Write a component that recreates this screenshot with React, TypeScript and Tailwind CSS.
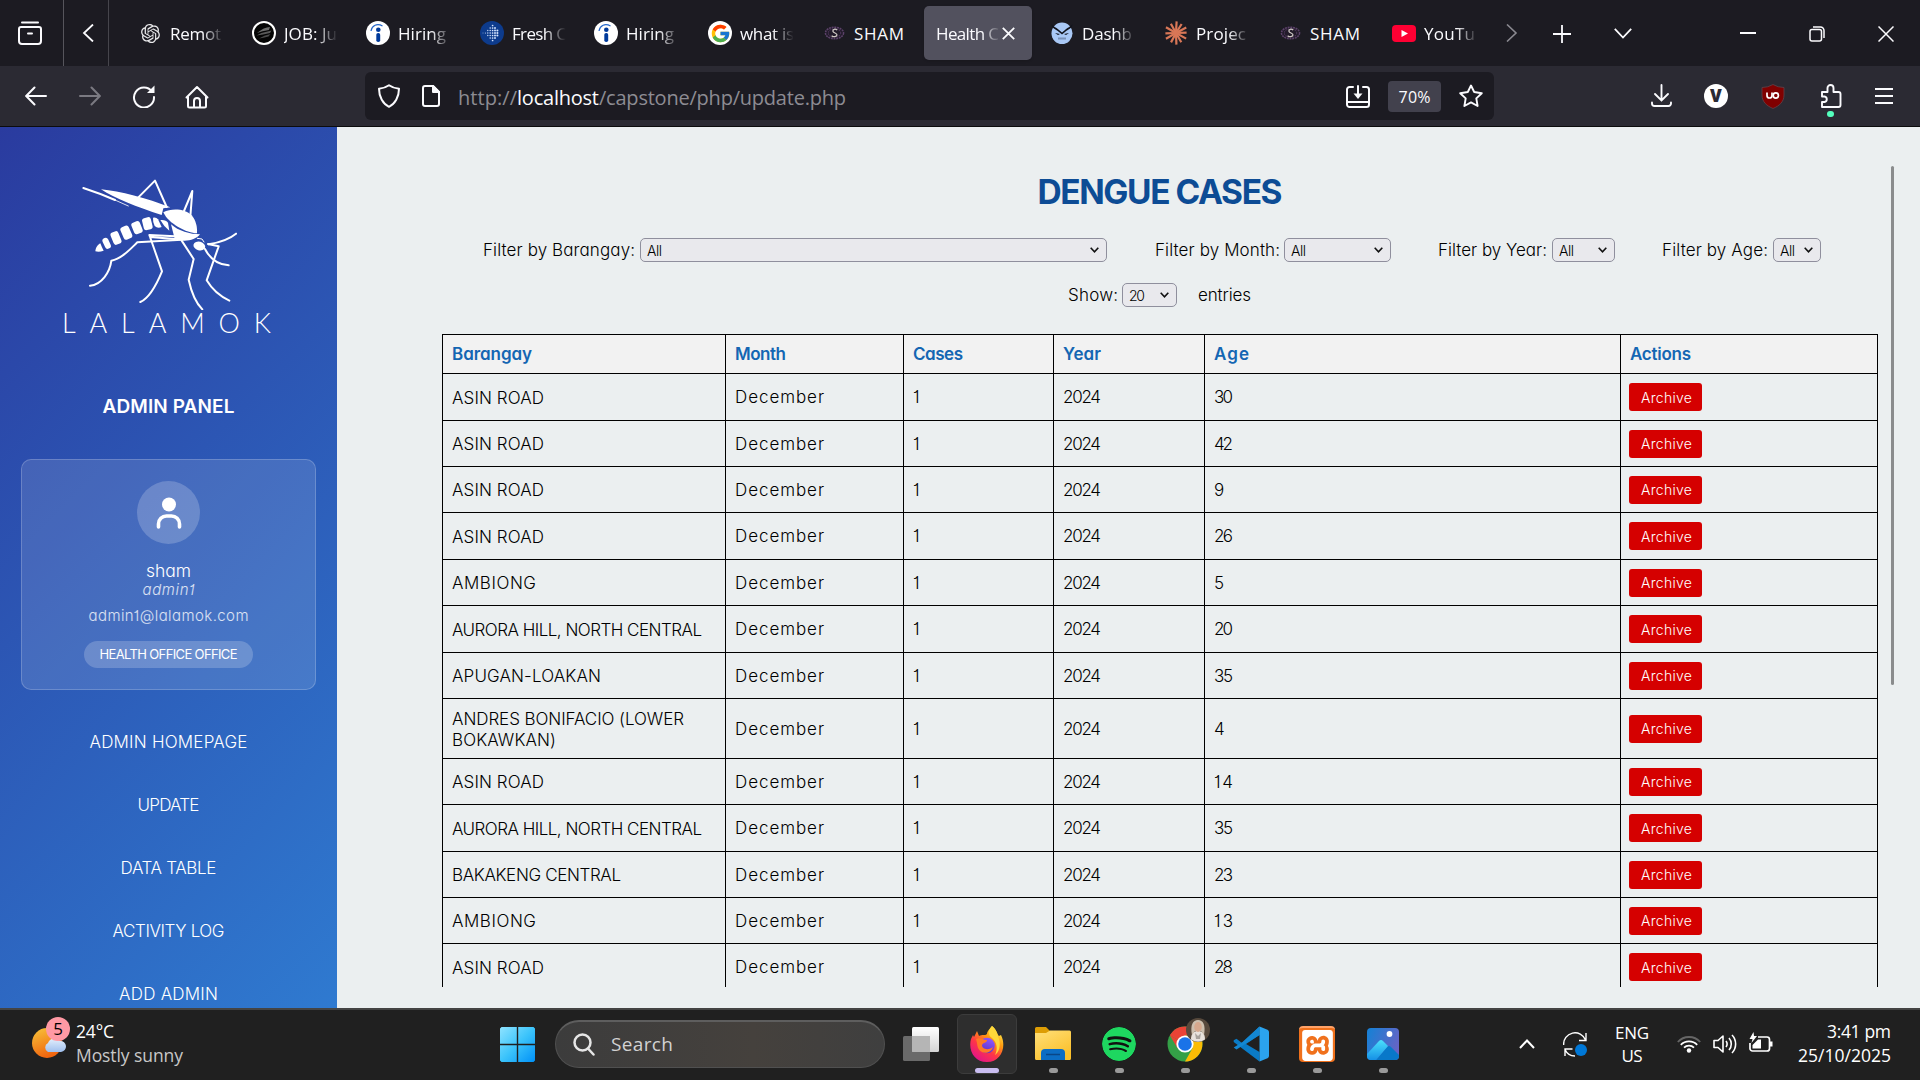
import { useLayoutEffect, useRef, type ReactNode } from "react";
import { RiOpenaiFill } from "react-icons/ri";
import { FcGoogle } from "react-icons/fc";
import { SiSpotify, SiXampp } from "react-icons/si";

/** A single line of text whose tracking is adjusted so that it spans `w` pixels. */
function Fit({ t, w, className = "" }: { t: string; w: number; className?: string }) {
  const ref = useRef<HTMLSpanElement>(null);
  useLayoutEffect(() => {
    const el = ref.current;
    if (!el) return;
    el.style.letterSpacing = "0px";
    el.style.marginRight = "0px";
    const natural = el.getBoundingClientRect().width;
    const gap = t.length > 1 ? (w + 1 - natural) / (t.length - 1) : 0;
    el.style.letterSpacing = `${gap}px`;
    el.style.marginRight = `${-gap}px`;
  }, [t, w]);
  return (
    <span ref={ref} className={"inline-block shrink-0 whitespace-nowrap " + className}>
      {t}
    </span>
  );
}

/* ---------- tab strip ---------- */

const IndeedIcon = () => (
  <svg viewBox="0 0 24 24" className="h-6 w-6">
    <circle cx="12" cy="12" r="12" fill="#fff" />
    <circle cx="12.3" cy="8.7" r="2.3" fill="#003a9b" />
    <rect x="10.3" y="12" width="3.9" height="9" rx="1.8" fill="#003a9b" />
    <path d="M5 10C6 4.500 11 2 16.500 5" fill="none" stroke="#2164c9" strokeWidth="1.200" />
  </svg>
);
const JobIcon = () => (
  <svg viewBox="0 0 24 24" className="h-6 w-6">
    <circle cx="12" cy="12" r="11" fill="#050505" stroke="#fff" strokeWidth="2" />
    <path d="M5 12Q12 6 18 6L17 9Q10 10 5 12Z" fill="#6d6d6d" />
    <path d="M4.500 14.500Q11 11 19.500 9.500L18 12Q11 13.500 4.500 14.500Z" fill="#5a5a5a" />
    <path d="M7 17.500Q12 14 18.500 13L16.500 15.500Q11 17 7 17.500Z" fill="#4b4b4b" />
  </svg>
);
const FreshIcon = () => {
  const cols = [1, 1, 2, 3, 4, 3, 2];
  return (
    <svg viewBox="0 0 24 24" className="h-6 w-6">
      <circle cx="12" cy="12" r="12" fill="#0d3b8c" />
      {cols.map((n, i) =>
        Array.from({ length: n * 2 - 1 }, (_, j) => (
          <circle key={`${i}-${j}`} cx={3 + i * 2.4} cy={12 + (j - n + 1) * 2.5} r={0.45 + i * 0.1} fill="#d7e6ff" />
        )),
      )}
    </svg>
  );
};
const GoogleIcon = () => (
  <span className="flex h-6 w-6 items-center justify-center rounded-full bg-white">
    <FcGoogle className="h-[21px] w-[21px]" />
  </span>
);
const ShamIcon = () => (
  <svg viewBox="0 0 22 14" className="h-[14px] w-[21px]">
    <ellipse cx="11" cy="7" rx="9.500" ry="6" fill="#221b2a" stroke="#5b4169" strokeWidth="1.600" strokeDasharray="2 0.8" />
    <ellipse cx="11" cy="7" rx="6.500" ry="4.500" fill="none" stroke="#4a3456" strokeWidth="1.200" strokeDasharray="1.500 1" />
    <path d="M13.800 4C12 2.300 9 3 9.300 5S13.800 7 13.600 9S10 11.600 8 9.800" fill="none" stroke="#cfc8c4" strokeWidth="1.300" />
  </svg>
);
const DashIcon = () => (
  <svg viewBox="0 0 24 24" className="h-6 w-6">
    <ellipse cx="12" cy="12.300" rx="10.500" ry="10.800" fill="#a9c8f5" />
    <path d="M1.500 3C2 8 6 8 9 11L12 13.500L15 11C18 8 22 8 22.500 3C21 6 17 6.500 15 9L12 11.500L9 9C7 6.500 3 6 1.500 3Z" fill="#10131c" />
    <path d="M5 12L10 13L8 14ZM19 12L14 13L16 14Z" fill="#10131c" />
    <rect x="8" y="16.500" width="8" height="2" fill="#7b92b8" />
  </svg>
);
const ClaudeIcon = () => (
  <svg viewBox="0 0 24 24" className="h-6 w-6">
    {[3, 32, 62, 88, 119, 150, 178, 208, 240, 268, 300, 331].map((a, i) => (
      <path key={a} d={i % 2 ? "M12 12V1.400" : "M12 12V0.400"} stroke="#d97757" strokeWidth="2.200" transform={`rotate(${a} 12 12)`} />
    ))}
  </svg>
);
const YoutubeIcon = () => (
  <svg viewBox="0 0 24 17" className="h-[17px] w-6">
    <rect width="24" height="17" rx="4" fill="#ff0033" />
    <path d="M9.500 5L16 8.500L9.500 12Z" fill="#fff" />
  </svg>
);

type Tab = { icon?: ReactNode; label: string; w: number; active?: boolean; solid?: boolean };
const tabs: Tab[] = [
  { icon: <RiOpenaiFill className="h-[23px] w-[23px] text-[#e8e8ea]" />, label: "Remot", w: 50 },
  { icon: <JobIcon />, label: "JOB: Ju", w: 52 },
  { icon: <IndeedIcon />, label: "Hiring", w: 47 },
  { icon: <FreshIcon />, label: "Fresh C", w: 54 },
  { icon: <IndeedIcon />, label: "Hiring", w: 47 },
  { icon: <GoogleIcon />, label: "what is", w: 53 },
  { icon: <ShamIcon />, label: "SHAM", w: 49, solid: true },
  { label: "Health C", w: 62, active: true },
  { icon: <DashIcon />, label: "Dashb", w: 49 },
  { icon: <ClaudeIcon />, label: "Projec", w: 49 },
  { icon: <ShamIcon />, label: "SHAM", w: 49, solid: true },
  { icon: <YoutubeIcon />, label: "YouTu", w: 50 },
];

function TabStrip() {
  return (
    <div className="flex h-[66px] items-center bg-[#1c1b22] text-[17px] text-[#fbfbfe]">
      <div className="flex h-full w-[64px] items-center border-r border-[#56555c] pl-[17px]">
        <svg viewBox="0 0 26 24" className="h-6 w-[26px]" fill="none" stroke="#fbfbfe" strokeWidth="2" strokeLinecap="round">
          <path d="M5 1.500H21" />
          <path d="M2 8V20a3 3 0 0 0 3 3H21a3 3 0 0 0 3-3V8a2 2 0 0 0-2-2H4a2 2 0 0 0-2 2ZM11 12.500H15" />
        </svg>
      </div>
      <div className="flex h-full w-[45px] items-center border-r border-[#46454c] pl-[18px]">
        <svg viewBox="0 0 12 18" className="h-[18px] w-3" fill="none" stroke="#fbfbfe" strokeWidth="1.800">
          <path d="M11 0.500L2 9L11 17.500" />
        </svg>
      </div>
      <div className="ml-[14px] flex h-full items-center">
        {tabs.map((tab, i) =>
          tab.active ? (
            <div key={i} className="mx-[3px] flex h-[54px] w-[108px] items-center rounded-[5px] bg-[#52515e] pl-3 shadow">
              <span className="w-[64px] overflow-hidden pt-px [mask-image:linear-gradient(to_right,black_72%,transparent)]">
                <Fit t={tab.label} w={tab.w} />
              </span>
              <svg viewBox="0 0 13 13" className="ml-0.5 h-[13px] w-[13px]" stroke="#fbfbfe" strokeWidth="1.800">
                <path d="M0.800 0.800L12.200 12.200M12.200 0.800L0.800 12.200" />
              </svg>
            </div>
          ) : (
            <div key={i} className="flex w-[114px] items-center pl-[15px]">
              <span className="flex w-6 shrink-0 justify-center">{tab.icon}</span>
              {tab.solid ? (
                <Fit t={tab.label} w={tab.w} className="ml-2 pt-px" />
              ) : (
                <span className="ml-2 w-[56px] overflow-hidden pt-px [mask-image:linear-gradient(to_right,black_58%,transparent_96%)]">
                  <Fit t={tab.label} w={tab.w} />
                </span>
              )}
            </div>
          ),
        )}
      </div>
      <svg viewBox="0 0 12 18" className="ml-[15px] h-[18px] w-3" fill="none" stroke="#8a8990" strokeWidth="1.600">
        <path d="M1 0.500L10 9L1 17.500" />
      </svg>
      <svg viewBox="0 0 18 18" className="ml-[35px] mt-px h-[18px] w-[18px]" stroke="#fbfbfe" strokeWidth="1.800">
        <path d="M9 0V18M0 9H18" />
      </svg>
      <svg viewBox="0 0 18 11" className="ml-[43px] h-[11px] w-[18px]" fill="none" stroke="#fbfbfe" strokeWidth="1.800">
        <path d="M0.800 0.800L9 9.500L17.200 0.800" />
      </svg>
      <svg viewBox="0 0 16 2" className="ml-[108px] h-0.5 w-4" fill="#fbfbfe">
        <rect width="16" height="2" />
      </svg>
      <svg viewBox="0 0 16 16" className="ml-[53px] mt-px h-4 w-4" fill="none" stroke="#fbfbfe" strokeWidth="1.500">
        <rect x="1" y="3.500" width="11.500" height="11.500" rx="2" />
        <path d="M4 1H11.500A3.500 3.500 0 0 1 15 4.500V12" />
      </svg>
      <svg viewBox="0 0 16 16" className="ml-[53px] mt-px h-4 w-4" stroke="#fbfbfe" strokeWidth="1.500">
        <path d="M0.500 0.500L15.500 15.500M15.500 0.500L0.500 15.500" />
      </svg>
    </div>
  );
}

/* ---------- navigation toolbar ---------- */

function Toolbar() {
  return (
    <div className="flex h-[61px] items-center border-b border-[#0c0c0d] bg-[#2b2a33] pl-[25px]">
      <svg viewBox="0 0 22 20" className="h-5 w-[22px]" fill="none" stroke="#fbfbfe" strokeWidth="2" strokeLinecap="round">
        <path d="M21 10H1.500M9.500 1.500L1.200 10L9.500 18.500" />
      </svg>
      <svg viewBox="0 0 22 20" className="ml-8 h-5 w-[22px]" fill="none" stroke="#7b7a82" strokeWidth="2" strokeLinecap="round">
        <path d="M1 10H20.500M12.500 1.500L20.800 10L12.500 18.500" />
      </svg>
      <svg viewBox="0 0 24 24" className="ml-[31px] h-6 w-6" fill="none" stroke="#fbfbfe" strokeWidth="2" strokeLinecap="round">
        <path d="M20 7.500A10 10 0 1 0 22 13" />
        <path d="M22.500 1.500V9H15Z" fill="#fbfbfe" stroke="none" />
      </svg>
      <svg viewBox="0 0 24 24" className="ml-[29px] mt-px h-6 w-6" fill="none" stroke="#fbfbfe" strokeWidth="2" strokeLinejoin="round" strokeLinecap="round">
        <path d="M1.500 12.500L12 2L22.500 12.500M3 11V21a1.500 1.500 0 0 0 1.500 1.500H19.500A1.500 1.500 0 0 0 21 21V11M9 22V16a3 3 0 0 1 6 0V22" />
      </svg>
      <div className="ml-[156px] flex h-12 w-[1129px] items-center rounded-[6px] bg-[#1c1b22] pl-[13px]">
        <svg viewBox="0 0 22 24" className="h-6 w-[22px]" fill="none" stroke="#fbfbfe" strokeWidth="2" strokeLinejoin="round">
          <path d="M11 1.200Q15 4 21 4.800C21 13 17 20 11 22.800C5 20 1 13 1 4.800Q7 4 11 1.200Z" />
        </svg>
        <svg viewBox="0 0 18 22" className="ml-[22px] h-[22px] w-[18px]" fill="none" stroke="#fbfbfe" strokeWidth="2" strokeLinejoin="round">
          <path d="M11 1H3A2 2 0 0 0 1 3V19A2 2 0 0 0 3 21H15A2 2 0 0 0 17 19V7Z" />
          <path d="M11 1V7H17Z" fill="#fbfbfe" />
        </svg>
        <div className="ml-[18px] flex w-[870px] pt-[3px] text-[20px] text-[#8d8c93]">
          <Fit t="http://" w={58} />
          <Fit t="localhost" w={81} className="text-[#fbfbfe]" />
          <Fit t="/capstone/php/update.php" w={246} />
        </div>
        <svg viewBox="0 0 24 23" className="ml-[18px] h-[23px] w-6 shrink-0" fill="none" stroke="#fbfbfe" strokeWidth="2" strokeLinecap="round">
          <path d="M7 2H3.500A2.500 2.500 0 0 0 1 4.500V19.500A2.500 2.500 0 0 0 3.500 22H20.500A2.500 2.500 0 0 0 23 19.500V4.500A2.500 2.500 0 0 0 20.500 2H17M1 17H23M12 1V11" />
          <path d="M7.500 8.500H16.500L12 14Z" fill="#fbfbfe" stroke="none" />
        </svg>
        <div className="ml-[18px] flex h-[31px] w-[53px] shrink-0 items-center justify-center rounded-[4px] bg-[#42414d] pt-px text-[16px] text-[#fbfbfe]">
          <Fit t="70%" w={31} />
        </div>
        <svg viewBox="0 0 24 24" className="ml-[18px] h-6 w-6 shrink-0" fill="none" stroke="#fbfbfe" strokeWidth="1.900" strokeLinejoin="round">
          <path d="M12 1.500L15.200 8L22.800 9.200L17.300 14.400L18.600 22L12 18.400L5.400 22L6.700 14.400L1.200 9.200L8.800 8Z" />
        </svg>
      </div>
      <svg viewBox="0 0 22 24" className="ml-[156px] h-6 w-[22px]" fill="none" stroke="#fbfbfe" strokeWidth="1.900" strokeLinecap="round">
        <path d="M11.500 1V16M5 10L11.500 16.500L18 10M2 18.500V19.500A2.500 2.500 0 0 0 4.500 22H18.500A2.500 2.500 0 0 0 21 19.500V18.500" />
      </svg>
      <span className="ml-[32px] flex h-6 w-6 items-center justify-center rounded-full bg-white text-[17px] font-extrabold text-[#2b2a33]">V</span>
      <svg viewBox="0 0 24 25" className="ml-[33px] h-[25px] w-6">
        <path d="M12 0.500Q17 3.500 23 3.500V11C23 18 18 22 12 24.500C6 22 1 18 1 11V3.500Q7 3.500 12 0.500Z" fill="#800000" stroke="#62424a" strokeWidth="0.800" />
        <path d="M6 8.500V11.500A2.500 2.500 0 0 0 11 11.500V8.500" fill="none" stroke="#fff" strokeWidth="1.700" />
        <circle cx="14.800" cy="11.500" r="2.600" fill="none" stroke="#fff" strokeWidth="1.700" />
      </svg>
      <div className="relative ml-[35px] h-6 w-[22px]">
        <svg viewBox="0 0 22 24" className="h-6 w-[22px]" fill="none" stroke="#fbfbfe" strokeWidth="1.900" strokeLinejoin="round">
          <path d="M2 8H7.500V4A3 3 0 0 1 13.500 4V8H18.500A2 2 0 0 1 20.500 10V21A2 2 0 0 1 18.500 23H2V18H4.500A2.800 2.800 0 0 0 4.500 12.500H2Z" />
        </svg>
        <span className="absolute left-[7px] top-[27px] h-[6px] w-[7px] rounded-full bg-[#54ffbd]" />
      </div>
      <svg viewBox="0 0 18 16" className="ml-[33px] h-4 w-[18px]" stroke="#fbfbfe" strokeWidth="1.800">
        <path d="M0 1H18M0 8H18M0 15H18" />
      </svg>
    </div>
  );
}

/* ---------- sidebar ---------- */

const segments = [
  { x: 320, y: 349, w: 18, h: 34, r: -25 },
  { x: 348, y: 333, w: 25, h: 39, r: -22 },
  { x: 379, y: 317, w: 27, h: 40, r: -24 },
  { x: 411, y: 302, w: 27, h: 37, r: -22 },
  { x: 442, y: 290, w: 27, h: 37, r: -14 },
];

function Mosquito() {
  return (
    <svg viewBox="0 0 1011 549" className="h-[183px] w-[337px] shrink-0" fill="none" stroke="#fff" strokeWidth="6" strokeLinecap="round" strokeLinejoin="round">
      <path d="M250 183C290 196 320 208 345 219" />
      <path d="M320 208L385 237" strokeWidth="2.500" />
      <g fill="#fff" stroke="none">
        <path d="M303 187C360 193 440 213 511 241L490 244L485 264C410 240 345 215 303 187Z" />
        <path d="M490 256C515 243 555 245 575 265C588 280 592 300 591 319C560 319 505 290 490 256Z" />
        <path d="M513 292C535 312 570 322 600 322C586 341 550 347 524 335Z" />
        <path d="M286 373C287 362 294 352 301 349C304 356 307 364 311 371Q298 376 286 373Z" />
        <path d="M459 272Q469 270 474 277L485 300Q473 306 464 297Q458 286 459 272Z" />
        <path d="M481 279Q497 277 504 287L508 311Q491 298 481 279Z" />
        <ellipse cx="598" cy="357" rx="18" ry="13" transform="rotate(15 598 357)" />
        {segments.map((s) => (
          <rect key={s.x} x={s.x - s.w / 2} y={s.y - s.h / 2} width={s.w} height={s.h} rx="8" transform={`rotate(${s.r} ${s.x} ${s.y})`} />
        ))}
      </g>
      <path d="M412 214L465 161L500 240M552 252L577 192L571 268" />
      <path d="M545 338L412 346C390 367 365 395 334 401C330 435 305 473 270 476" />
      <path d="M525 328L448 324L486 433C470 472 448 513 421 525M450 330L525 336" />
      <path d="M545 341L581 396L566 458C574 495 590 530 607 547" />
      <path d="M624 351L656 358L620 460C635 485 660 508 688 521" />
      <path d="M615 366C630 395 650 413 686 415M626 352C660 346 690 335 708 320" />
      <path d="M592 334L606 336L612 345" strokeWidth="3" />
    </svg>
  );
}

const nav = [
  { t: "ADMIN HOMEPAGE", w: 157 },
  { t: "UPDATE", w: 61 },
  { t: "DATA TABLE", w: 95 },
  { t: "ACTIVITY LOG", w: 111 },
  { t: "ADD ADMIN", w: 98 },
];

function Sidebar() {
  return (
    <aside className="flex w-[337px] shrink-0 flex-col items-center overflow-hidden bg-[linear-gradient(135deg,#2a3b9f_0%,#2f7ad0_100%)] text-white">
      <Mosquito />
      <div className="mr-[4px] flex h-[25px] shrink-0 items-center font-[Lato] text-[27px] font-light leading-none">
        <Fit t="LALAMOK" w={208} />
      </div>
      <div className="mt-[60px] flex h-6 shrink-0 items-center text-[19px] font-semibold">
        <Fit t="ADMIN PANEL" w={131} />
      </div>
      <div className="mt-10 flex h-[231px] w-[295px] shrink-0 flex-col items-center rounded-[10px] border border-white/20 bg-white/12 pt-[21px]">
        <div className="flex h-[63px] w-[63px] shrink-0 items-center justify-center rounded-full bg-white/20">
          <svg viewBox="0 0 26 32" className="h-8 w-[26px]">
            <circle cx="13" cy="7.500" r="7" fill="#fff" />
            <path d="M2.500 30V27A8 8 0 0 1 10.500 19H15.500A8 8 0 0 1 23.500 27V30" fill="none" stroke="#fff" strokeWidth="3.600" strokeLinecap="round" />
          </svg>
        </div>
        <div className="mt-[17px] flex h-5 items-center text-[17.5px] font-light"><Fit t="sham" w={44} /></div>
        <div className="flex h-[19px] items-center text-[15px] font-light italic text-white/80"><Fit t="admin1" w={51} /></div>
        <div className="mt-[7px] flex h-[19px] items-center text-[15px] font-light text-white/80"><Fit t="admin1@lalamok.com" w={159} /></div>
        <div className="mt-[15px] flex h-[27px] w-[169px] items-center justify-center rounded-full bg-white/20 text-[13px]">
          <Fit t="HEALTH OFFICE OFFICE" w={137} />
        </div>
      </div>
      <nav className="mt-[21px] flex flex-col items-center text-[17px] font-light">
        {nav.map((n) => (
          <div key={n.t} className="flex h-[63px] items-center"><Fit t={n.t} w={n.w} /></div>
        ))}
      </nav>
    </aside>
  );
}

/* ---------- main content ---------- */

function Select({ value, vw, className }: { value: string; vw: number; className: string }) {
  return (
    <span className={"flex h-6 items-center justify-between rounded-[5px] border border-[#8f8f9d] bg-[#e9e9ed] pl-[6px] pr-[7px] text-[14px] " + className}>
      <Fit t={value} w={vw} />
      <svg viewBox="0 0 9 6" className="h-1.5 w-[9px]" fill="none" stroke="#111" strokeWidth="1.600">
        <path d="M0.700 0.700L4.500 4.800L8.300 0.700" />
      </svg>
    </span>
  );
}

const filters = [
  { t: "Filter by Barangay:", w: 151, sel: "w-[467px] ml-[4.500px]", slot: "w-[624px]", gap: "" },
  { t: "Filter by Month:", w: 124, sel: "w-[107px]", slot: "w-[236px]", gap: "ml-[48px]" },
  { t: "Filter by Year:", w: 108, sel: "w-[63px]", slot: "w-[177px]", gap: "ml-[47px]" },
  { t: "Filter by Age:", w: 105, sel: "w-[48px]", slot: "w-[159px]", gap: "ml-[47px]" },
];

const headers = [
  { t: "Barangay", w: 79 },
  { t: "Month", w: 50 },
  { t: "Cases", w: 49 },
  { t: "Year", w: 37 },
  { t: "Age", w: 34 },
  { t: "Actions", w: 60 },
];

type Row = { name: { t: string; w: number }[]; age: string; h: string };
const ASIN = [{ t: "ASIN ROAD", w: 91 }];
const AMBIONG = [{ t: "AMBIONG", w: 83 }];
const AURORA = [{ t: "AURORA HILL, NORTH CENTRAL", w: 249 }];
const rows: Row[] = [
  { name: ASIN, age: "30", h: "h-[47px]" },
  { name: ASIN, age: "42", h: "h-[46px]" },
  { name: ASIN, age: "9", h: "h-[46px]" },
  { name: ASIN, age: "26", h: "h-[47px]" },
  { name: AMBIONG, age: "5", h: "h-[46px]" },
  { name: AURORA, age: "20", h: "h-[47px]" },
  { name: [{ t: "APUGAN-LOAKAN", w: 148 }], age: "35", h: "h-[46px]" },
  { name: [{ t: "ANDRES BONIFACIO (LOWER", w: 231 }, { t: "BOKAWKAN)", w: 103 }], age: "4", h: "h-[60px]" },
  { name: ASIN, age: "14", h: "h-[46px]" },
  { name: AURORA, age: "35", h: "h-[47px]" },
  { name: [{ t: "BAKAKENG CENTRAL", w: 168 }], age: "23", h: "h-[46px]" },
  { name: AMBIONG, age: "13", h: "h-[46px]" },
  { name: ASIN, age: "28", h: "h-[47px]" },
];

const gridCols = "grid shrink-0 grid-cols-[283px_178px_150px_151px_416px_257px] border-t border-black";
const cell = "flex items-center border-r border-black pl-[9px] pt-[2px]";

function Main() {
  return (
    <main className="flex min-w-0 flex-1 bg-[#ebeff0] text-black">
      <div className="ml-[105px] flex w-[1436px] shrink-0 flex-col pb-[21px]">
        <h1 className="mt-[51px] flex h-7 shrink-0 items-center justify-center text-[33.500px] font-bold text-[#0d4c95]">
          <Fit t="DENGUE CASES" w={244} />
        </h1>
        <div className="mt-[32px] flex h-6 shrink-0 items-center pl-[41px] text-[17px] font-light">
          {filters.map((f) => (
            <div key={f.t} className={"flex items-center justify-between " + f.slot + " " + f.gap}>
              <Fit t={f.t} w={f.w} className="pt-0.5" />
              <Select value="All" vw={14} className={f.sel} />
            </div>
          ))}
        </div>
        <div className="mt-[21px] flex h-6 shrink-0 items-center pl-[626px] text-[17px] font-light">
          <Fit t="Show:" w={49} className="pt-0.5" />
          <Select value="20" vw={15} className="ml-[4px] w-[55px]" />
          <Fit t="entries" w={52} className="ml-[21px] pt-0.5" />
        </div>
        <div className="mt-[27px] flex min-h-0 flex-1 flex-col overflow-hidden border-l border-black text-[17px] font-light">
          <div className={gridCols + " h-[39px] bg-[#f2f2f2] font-semibold text-[#1466b3]"}>
            {headers.map((h) => (
              <div key={h.t} className={cell}><Fit t={h.t} w={h.w} /></div>
            ))}
          </div>
          {rows.map((r, i) => (
            <div key={i} className={gridCols + " " + r.h}>
              <div className={cell}>
                <div className="flex flex-col items-start leading-[21px]">
                  {r.name.map((n) => <Fit key={n.t} t={n.t} w={n.w} />)}
                </div>
              </div>
              <div className={cell}><Fit t="December" w={88} /></div>
              <div className={cell}>1</div>
              <div className={cell}><Fit t="2024" w={37} /></div>
              <div className={cell}><Fit t={r.age} w={18} /></div>
              <div className="flex items-center border-r border-black pl-2">
                <span className="flex h-7 w-[73px] items-center justify-center rounded-[3px] bg-[#d50000] pl-0.5 text-[14px] text-white">
                  <Fit t="Archive" w={50} />
                </span>
              </div>
            </div>
          ))}
        </div>
      </div>
      <div className="ml-[13px] mt-[39px] h-[519px] w-[3px] rounded-full bg-[#8a8c8d]" />
    </main>
  );
}

/* ---------- taskbar ---------- */

const WeatherIcon = () => (
  <div className="relative h-12 w-[40px]">
    <svg viewBox="0 0 40 48" className="h-12 w-10">
      <defs>
        <linearGradient id="sun" x1="0" y1="0" x2="0.400" y2="1">
          <stop offset="0" stopColor="#f8c53a" />
          <stop offset="1" stopColor="#f0650f" />
        </linearGradient>
        <linearGradient id="cloud" x1="0" y1="0" x2="0" y2="1">
          <stop offset="0" stopColor="#e4effc" />
          <stop offset="1" stopColor="#9fbfee" />
        </linearGradient>
      </defs>
      <circle cx="16" cy="28" r="15" fill="url(#sun)" />
      <path d="M17 37A5 5 0 0 1 17 28A7 7 0 0 1 29 26A5.500 5.500 0 0 1 30 37Z" fill="url(#cloud)" />
    </svg>
    <span className="absolute left-[15px] top-[2px] flex h-6 w-6 items-center justify-center rounded-full bg-[#ff99a4] text-[17px] text-black">5</span>
  </div>
);

const WindowsIcon = () => (
  <svg viewBox="0 0 35 35" className="h-[35px] w-[35px]">
    <defs>
      <linearGradient id="win" x1="0" y1="0" x2="1" y2="1">
        <stop offset="0" stopColor="#8fe3ff" />
        <stop offset="0.500" stopColor="#3cc4fb" />
        <stop offset="1" stopColor="#0091f7" />
      </linearGradient>
    </defs>
    <path d="M1.500 0H16.800V16.800H0V1.500ZM18.200 0H33.500L35 1.500V16.800H18.200ZM0 18.200H16.800V35H1.500L0 33.500ZM18.200 18.200H35V33.500L33.500 35H18.200Z" fill="url(#win)" />
  </svg>
);

const FirefoxIcon = () => (
  <svg viewBox="0 0 34 36" className="h-9 w-[34px]">
    <defs>
      <linearGradient id="ff" x1="0.850" y1="0.050" x2="0.250" y2="0.950">
        <stop offset="0" stopColor="#fff44f" />
        <stop offset="0.350" stopColor="#ff980e" />
        <stop offset="0.650" stopColor="#ff3647" />
        <stop offset="1" stopColor="#e31587" />
      </linearGradient>
      <linearGradient id="ffg" x1="0.700" y1="0" x2="0.300" y2="1">
        <stop offset="0" stopColor="#9059ff" />
        <stop offset="1" stopColor="#5b2fc4" />
      </linearGradient>
    </defs>
    <path d="M22 0C27 4 27 8 29 10L31 9C37 21 31 36 17 36C4 36-2 24 1 13L3 9L4 11L7 5L9 10C12 8 15 10 17 8C17 5 20 3 22 0Z" fill="url(#ff)" />
    <circle cx="17" cy="19.500" r="7.800" fill="url(#ffg)" />
    <path d="M6 13C10 11 12 14 17 14C17 17 13 16.500 12 19C12 23 18 25 23 21C21 28 11 29 8 22C7 19 7 16 6 13Z" fill="#ff7a26" />
    <path d="M22 0C27 4 27 8 29 13C31 20 29 26 25 29C28 23 27 16 22 12C17 9 19 3 22 0Z" fill="#ffd83a" />
  </svg>
);

const FolderIcon = () => (
  <svg viewBox="0 0 36 34" className="h-[34px] w-9">
    <defs>
      <linearGradient id="fold" x1="0" y1="0" x2="0.600" y2="1">
        <stop offset="0" stopColor="#ffe07a" />
        <stop offset="1" stopColor="#fbc02b" />
      </linearGradient>
    </defs>
    <path d="M0 1.500A1.500 1.500 0 0 1 1.500 0H11L15 4V9H0Z" fill="#dd9d05" />
    <path d="M0 6H11L15 3.500H34.500A1.500 1.500 0 0 1 36 5V31.500A1.500 1.500 0 0 1 34.500 33H1.500A1.500 1.500 0 0 1 0 31.500Z" fill="url(#fold)" />
    <path d="M6 33V26A4 4 0 0 1 10 22H26A4 4 0 0 1 30 26V33Z" fill="#0c6dc4" />
    <path d="M11 27.500H25" stroke="#0a4687" strokeWidth="1.500" />
  </svg>
);

const ChromeIcon = () => (
  <div className="relative h-9 w-9">
    <svg viewBox="0 0 36 36" className="h-9 w-9">
      <circle cx="18" cy="18" r="17.500" fill="#34a047" />
      <path d="M18 18L2.800 9.300A17.500 17.500 0 0 1 33.200 9.300H18Z" fill="#ea4335" />
      <path d="M18 9.500H33.200A17.500 17.500 0 0 1 18 35.500L25.500 22.300Z" fill="#fbbc05" />
      <path d="M2.800 9.300L10.500 22.300L18 18Z" fill="#ea4335" />
      <circle cx="18" cy="18" r="8.600" fill="#fff" />
      <circle cx="18" cy="18" r="6.800" fill="#1a73e8" />
    </svg>
    <svg viewBox="0 0 24 24" className="absolute -top-2 left-[19px] h-6 w-6">
      <circle cx="12" cy="12" r="12" fill="#57493c" />
      <path d="M5 21.500C5 15 8 13 12 13S19 15 19 21.500Q12 26 5 21.500Z" fill="#e8e2dc" />
      <path d="M6 17C4 7 7 2 12 2S20 7 18 17L15 13H9Z" fill="#cdbfae" />
      <ellipse cx="12" cy="9" rx="3.800" ry="5" fill="#d6a88d" />
      <path d="M9 15L12 18L15 15L14 21H10Z" fill="#a8a29c" />
    </svg>
  </div>
);

const CodeIcon = () => (
  <svg viewBox="0 0 36 36" className="h-9 w-9">
    <path d="M26.500 0.500L9 17L3.500 12.800L0.700 14.300V16L26.500 35.500V26L13 18L26.500 9Z" fill="#0a7bc6" />
    <path d="M0.700 21.500L3.500 23.500L26.500 9V0.500L9.500 16Z" fill="#1387d2" />
    <path d="M26.500 0.500L34.500 3.800Q36 4.500 36 6V30Q36 31.500 34.500 32.200L26.500 35.500Z" fill="#2ba3ee" />
  </svg>
);

const XamppIcon = () => (
  <span className="flex h-9 w-9 items-center justify-center rounded-[4px] border-t-2 border-[#ffa268] bg-[#f0711c] text-white">
    <SiXampp className="h-[31px] w-[31px]" />
  </span>
);

const PhotosIcon = () => (
  <svg viewBox="0 0 32 32" className="h-8 w-8">
    <defs>
      <linearGradient id="ph" x1="0" y1="0.300" x2="1" y2="0.700">
        <stop offset="0" stopColor="#1b7fd4" />
        <stop offset="1" stopColor="#6a62c4" />
      </linearGradient>
      <linearGradient id="ph2" x1="0.500" y1="0" x2="0.500" y2="1">
        <stop offset="0" stopColor="#4be0fc" />
        <stop offset="1" stopColor="#1590e6" />
      </linearGradient>
    </defs>
    <rect width="32" height="32" rx="4" fill="url(#ph)" />
    <circle cx="22.500" cy="6" r="2.900" fill="#fff" />
    <path d="M9 32L20 19Q22 17 24 19L32 27V28A4 4 0 0 1 28 32Z" fill="#0878c9" />
    <path d="M0 26L12 13Q14 11 16 13L21 18L9 32H4A4 4 0 0 1 0 28Z" fill="url(#ph2)" />
  </svg>
);

const apps: { name: string; icon: ReactNode }[] = [
  { name: "files", icon: <FolderIcon /> },
  { name: "spotify", icon: <SiSpotify className="h-[34px] w-[34px] rounded-full bg-[#111] text-[#1ed760]" /> },
  { name: "chrome", icon: <ChromeIcon /> },
  { name: "code", icon: <CodeIcon /> },
  { name: "xampp", icon: <XamppIcon /> },
  { name: "photos", icon: <PhotosIcon /> },
];

function Taskbar() {
  return (
    <div className="flex h-[72px] items-start border-t-2 border-[#444444] bg-[#202020] text-[17.5px] text-white">
      <div className="ml-[31px] mt-[5px] flex w-[469px]">
        <WeatherIcon />
        <div className="ml-[5px] mt-[4px] flex flex-col items-start leading-6">
          <Fit t="24°C" w={37} />
          <Fit t="Mostly sunny" w={106} className="text-[#c8c8c8]" />
        </div>
      </div>
      <div className="mt-[17px]"><WindowsIcon /></div>
      <div className="ml-5 mt-2.5 flex h-12 w-[330px] items-center rounded-full border border-t-2 border-[#505050] border-t-[#5e5e5e] bg-[linear-gradient(90deg,#3c3c3c,#45413d_60%,#3f3f3f)] pl-[17px]">
        <svg viewBox="0 0 22 23" className="h-[23px] w-[22px]" fill="none" stroke="#e6e6e6" strokeWidth="2.500" strokeLinecap="round">
          <circle cx="9.500" cy="9.500" r="8" />
          <path d="M15 15.500L20.500 21.500" />
        </svg>
        <Fit t="Search" w={61} className="ml-4 text-[19px] text-[#d2d2d2]" />
      </div>
      <svg viewBox="0 0 36 34" className="ml-[18px] mt-[17px] h-[34px] w-9">
        <defs>
          <linearGradient id="tv" x1="0" y1="0" x2="0" y2="1">
            <stop offset="0" stopColor="#fff" />
            <stop offset="1" stopColor="#d4d4d4" />
          </linearGradient>
        </defs>
        <rect x="0" y="9" width="27" height="25" rx="1.500" fill="#6a6a6a" />
        <rect x="9" y="0" width="27" height="25" rx="1.500" fill="url(#tv)" />
        <path d="M9 9H27V25H10.500A1.500 1.500 0 0 1 9 23.500Z" fill="#b5b5b5" />
      </svg>
      <div className="ml-[18px] mt-1 flex h-[60px] w-[60px] flex-col items-center rounded-[6px] border border-[#3c3c3c] bg-[#2e2e2e] pt-[11px]">
        <FirefoxIcon />
        <span className="mt-[6px] h-[5px] w-6 rounded-full bg-[#c9bdf0]" />
      </div>
      <div className="ml-[3px] mt-4 flex">
        {apps.map((a) => (
          <div key={a.name} className="flex w-[66px] flex-col items-center">
            <div className="flex h-9 items-center">{a.icon}</div>
            <span className="mt-[6px] h-[5px] w-[9px] rounded-full bg-[#9a9a9a]" />
          </div>
        ))}
      </div>
      <svg viewBox="0 0 16 10" className="ml-[103px] mt-[29px] h-2.5 w-4" fill="none" stroke="#fff" strokeWidth="2">
        <path d="M1 9L8 1.500L15 9" />
      </svg>
      <svg viewBox="0 0 24 25" className="ml-[28px] mt-[22px] h-[25px] w-6" fill="none" stroke="#fff" strokeWidth="1.400">
        <path d="M0.700 13A11.300 11.300 0 0 1 22.500 8M23 1V8.500H16M2 24V17H9.500M2 17.500C4 22 8 24 12 24" />
        <circle cx="18" cy="18" r="6" fill="#0078d7" stroke="none" />
      </svg>
      <div className="ml-[24px] mt-[11px] flex w-[42px] flex-col items-center text-[17px] leading-[23px]">
        <Fit t="ENG" w={33} />
        <Fit t="US" w={20} />
      </div>
      <svg viewBox="0 0 24 18" className="ml-[24px] mt-[25px] h-[18px] w-6" fill="none" stroke="#fff" strokeWidth="1.800">
        <path d="M0.800 7A15 15 0 0 1 23.200 7" stroke="#666" />
        <path d="M3.800 9.800A11.500 11.500 0 0 1 20.200 9.800M7 12.600A7.300 7.300 0 0 1 17 12.600" />
        <circle cx="12" cy="15.500" r="2.200" fill="#fff" stroke="none" />
      </svg>
      <svg viewBox="0 0 24 20" className="ml-3 mt-[24px] h-5 w-6" fill="none" stroke="#fff" strokeWidth="1.600" strokeLinejoin="round">
        <path d="M1 6.500V13.500H5L10 18V2L5 6.500ZM13 7A5 5 0 0 1 13 13M16 4A9 9 0 0 1 16 16M19 1A13 13 0 0 1 19 19" />
      </svg>
      <svg viewBox="0 0 24 20" className="ml-3 mt-[22px] h-5 w-6" fill="none" stroke="#fff" strokeWidth="1.700">
        <path d="M9 5H18A2.500 2.500 0 0 1 20.500 7.500V16.500A2.500 2.500 0 0 1 18 19H3.500A2.500 2.500 0 0 1 1 16.500V11" />
        <path d="M12 7.500V16.500H3.500V13L9 7.500ZM21 9.500H23.500V14.500H21ZM4.500 0L0.500 7H3.500L2.500 11L8 4H5Z" fill="#fff" stroke="none" />
      </svg>
      <div className="ml-5 mt-[9px] flex w-[98px] flex-col items-end leading-6">
        <Fit t="3:41 pm" w={63} />
        <Fit t="25/10/2025" w={92} />
      </div>
    </div>
  );
}

export default function App() {
  return (
    <div className="flex h-[1080px] w-[1920px] flex-col overflow-hidden font-['Open_Sans',sans-serif]">
      <TabStrip />
      <Toolbar />
      <div className="flex h-[881px] font-[Inter,sans-serif] [font-feature-settings:'cv11','cv01']">
        <Sidebar />
        <Main />
      </div>
      <Taskbar />
    </div>
  );
}
